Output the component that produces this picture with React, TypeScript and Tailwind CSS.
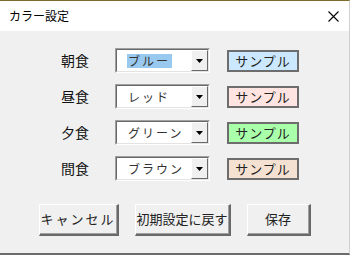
import React from "react";

const rows = [
  { label: "朝食", value: "ブルー", bg: "bg-[#cce8ff]", selected: true },
  { label: "昼食", value: "レッド", bg: "bg-[#ffe4e1]", selected: false },
  { label: "夕食", value: "グリーン", bg: "bg-[#aaffaa]", selected: false },
  { label: "間食", value: "ブラウン", bg: "bg-[#f5e1d2]", selected: false },
];

function Combo({ value, selected }: { value: string; selected: boolean }) {
  // sunken 3D field like a classic Win32 combo box
  return (
    <div className="w-[95px] h-[25px] border-t border-l border-t-[#a0a0a0] border-l-[#a0a0a0] border-b border-r border-b-white border-r-white">
      <div className="h-full flex items-center bg-white border-t border-l border-t-[#696969] border-l-[#696969] border-b border-r border-b-[#e3e3e3] border-r-[#e3e3e3]">
        <div className="flex-1 pl-[10px] flex items-center">
          <span
            className={`text-[12px] leading-[14px] tracking-[2px] px-[1px] text-[#333] ${
              selected ? "bg-[#99c9ef] pr-[2px]" : ""
            }`}
          >
            {value}
          </span>
        </div>
        <div className="w-[17px] h-[21px] bg-[#f0f0f0] flex items-center justify-center border-t border-l border-t-white border-l-white border-b border-r border-b-[#696969] border-r-[#696969]">
          <svg width="7" height="4" viewBox="0 0 7 4">
            <path d="M0 0 H7 L3.5 4 Z" fill="#000" />
          </svg>
        </div>
      </div>
    </div>
  );
}

function Btn({ w, children }: { w: string; children: React.ReactNode }) {
  return (
    <div className={`${w} h-[32px] border-t border-l border-t-white border-l-white border-b-2 border-r-2 border-b-[#696969] border-r-[#696969]`}>
      <div className="h-full flex items-center justify-center border-b border-r border-b-[#a0a0a0] border-r-[#a0a0a0] text-[13px] text-[#222]">
        {children}
      </div>
    </div>
  );
}

export default function App() {
  return (
    <div
      className="w-[350px] h-[255px] flex flex-col bg-[#f0f0f0] border-t border-t-[#7d6a2c] border-b-2 border-b-[#6b6b6b] border-r border-r-[#d0d0d0]"
      style={{ fontFamily: '"Noto Sans CJK JP", "Noto Sans", sans-serif' }}
    >
      {/* title bar */}
      <div className="h-[30px] bg-white flex items-center justify-between pl-[9px] pr-[10px]">
        <span className="text-[12px] text-black">カラー設定</span>
        <svg width="11" height="11" viewBox="0 0 11 11">
          <path d="M0.5 0.5 L10.5 10.5 M10.5 0.5 L0.5 10.5" stroke="#000" strokeWidth="1.1" />
        </svg>
      </div>

      <div className="flex flex-col gap-[11px] pt-[17px]">
        {rows.map((r) => (
          <div key={r.label} className="flex items-center h-[25px]">
            <div className="w-[50px] ml-[50px] text-center text-[14px] text-[#111]">{r.label}</div>
            <div className="ml-[15px]">
              <Combo value={r.value} selected={r.selected} />
            </div>
            <div
              className={`ml-[17px] w-[72px] h-[22px] border-2 border-[#6d6d6d] ${r.bg} flex items-center justify-center text-[13px] tracking-[1px] text-[#222]`}
            >
              サンプル
            </div>
          </div>
        ))}
      </div>

      <div className="flex gap-[16px] pl-[39px] mt-[23px]">
        <Btn w="w-[80px]"><span className="tracking-[2px]">キャンセル</span></Btn>
        <Btn w="w-[96px]">初期設定に戻す</Btn>
        <Btn w="w-[64px]">保存</Btn>
      </div>
    </div>
  );
}
